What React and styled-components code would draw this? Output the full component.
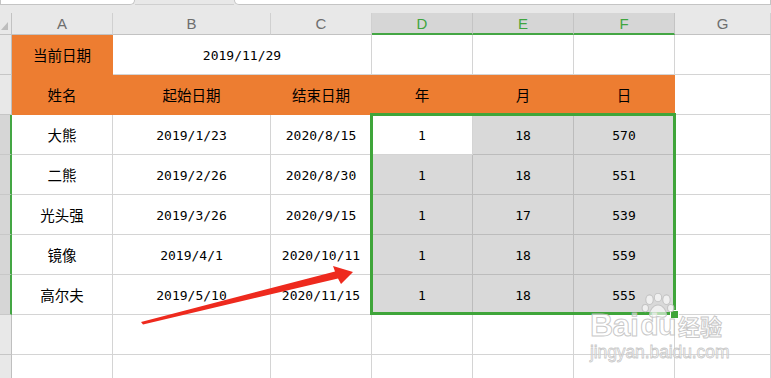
import React from "react";
import styled, { createGlobalStyle, css } from "styled-components";

const Global = createGlobalStyle`
  html, body { margin: 0; padding: 0; background: #ffffff; }
  body { font-family: "Noto Sans CJK SC", "Liberation Sans", sans-serif; }
`;

const Page = styled.div`
  position: relative;
  width: 771px;
  height: 378px;
  overflow: hidden;
  background: #ffffff;
`;

const TabStrip = styled.div`
  display: flex;
  height: 13px;
  background: #e8e8e8;
  align-items: flex-start;
`;

const Tab = styled.div`
  height: 4px;
  width: ${(p) => p.$w};
  flex: ${(p) => (p.$grow ? "1" : "none")};
  background: #ffffff;
  border: 1px solid #c4c4c4;
  border-top: none;
  border-radius: ${(p) => (p.$side === "left" ? "0 0 6px 0" : "0 0 0 6px")};
`;

const Gap = styled.div`
  width: ${(p) => p.$w};
  height: 5px;
  border-bottom: 1px solid #cfcfcf;
  box-sizing: border-box;
`;

const Sheet = styled.div`
  display: grid;
  grid-template-columns: 12px 101px 158px 101px 101px 101px 101px 1fr;
  grid-template-rows: 22px repeat(9, 40px);
`;

const Corner = styled.div`
  position: relative;
  background: #e8e8e8;
  border-right: 1px solid #c2c2c2;
  border-bottom: 1px solid #c2c2c2;
  box-sizing: border-box;
  &::after {
    content: "";
    position: absolute;
    left: 1px;
    bottom: 4px;
    width: 0;
    height: 0;
    border-left: 7px solid transparent;
    border-bottom: 8px solid #bdbdbd;
  }
`;

const ColHead = styled.div`
  display: flex;
  align-items: center;
  justify-content: center;
  box-sizing: border-box;
  font-family: "Liberation Sans", Arial, sans-serif;
  font-size: 15px;
  ${(p) =>
    p.$active
      ? css`
          background: #d6d6d6;
          color: #3fa53f;
          border-right: 1px solid #c4c4c4;
          border-bottom: 2px solid #44a644;
          padding-top: 1px;
        `
      : css`
          background: #e8e8e8;
          color: #6e6e6e;
          border-right: 1px solid #d0d0d0;
          border-bottom: 1px solid #c2c2c2;
        `}
`;

const RowHead = styled.div`
  box-sizing: border-box;
  ${(p) =>
    p.$active
      ? css`
          background: #d6d6d6;
          border-right: 2px solid #44a644;
          border-bottom: 1px solid #c8c8c8;
        `
      : css`
          background: #e8e8e8;
          border-right: 1px solid #bfbfbf;
          border-bottom: 1px solid #c6c6c6;
        `}
`;

const fills = {
  white: { bg: "#ffffff", line: "#d4d4d4" },
  orange: { bg: "#ed7d31", line: "#ed7d31" },
  gray: { bg: "#d9d9d9", line: "#bcbcbc" },
};

const Cell = styled.div`
  display: flex;
  align-items: center;
  justify-content: center;
  box-sizing: border-box;
  grid-column: ${(p) => (p.$span ? `span ${p.$span}` : "auto")};
  background: ${(p) => fills[p.$fill || "white"].bg};
  border-right: 1px solid ${(p) => fills[p.$fill || "white"].line};
  border-bottom: 1px solid ${(p) => fills[p.$fill || "white"].line};
  color: #000000;
  white-space: nowrap;
  font-family: ${(p) =>
    p.$num
      ? `"DejaVu Sans Mono", "Liberation Mono", monospace`
      : `"Noto Sans CJK SC", sans-serif`};
  font-size: ${(p) => (p.$num ? "13px" : "14.5px")};
  padding-top: ${(p) => (p.$num ? "1px" : "0")};
`;

const Selection = styled.div`
  position: absolute;
  left: 370px;
  top: 113px;
  width: 306px;
  height: 202px;
  box-sizing: border-box;
  border: 3px solid #3fa53a;
  pointer-events: none;
`;

const Handle = styled.div`
  position: absolute;
  left: 670px;
  top: 310px;
  width: 7px;
  height: 7px;
  background: #3fa53a;
  border: 1px solid #ffffff;
`;

const Overlay = styled.svg`
  position: absolute;
  left: 0;
  top: 0;
  pointer-events: none;
`;

const Watermark = styled.div`
  position: absolute;
  left: 590px;
  top: 292px;
  width: 160px;
  height: 72px;
  pointer-events: none;
`;

const WmRow = styled.div`
  display: flex;
  align-items: center;
  gap: 2px;
  height: 28px;
  margin-top: 19px;
`;

const WmText = styled.span`
  display: block;
  font-family: ${(p) => (p.$cjk ? `"Noto Sans CJK SC", sans-serif` : `"Liberation Sans", Arial, sans-serif`)};
  font-weight: bold;
  font-size: ${(p) => p.$size};
  line-height: 26px;
  height: 26px;
  color: rgba(255, 255, 255, 0.55);
  -webkit-text-stroke: 1px rgba(190, 190, 190, 0.85);
  letter-spacing: ${(p) => p.$ls || "0"};
`;

const WmPaw = styled.svg`
  position: absolute;
  left: 50px;
  top: 1px;
`;

const WmUrl = styled.div`
  margin-top: 4px;
  font-family: "Liberation Sans", Arial, sans-serif;
  font-size: 17.5px;
  line-height: 18px;
  color: rgba(255, 255, 255, 0.55);
  -webkit-text-stroke: 0.8px rgba(190, 190, 190, 0.85);
  letter-spacing: -0.1px;
`;

const cols = ["A", "B", "C", "D", "E", "F", "G"];

const data = [
  ["大熊", "2019/1/23", "2020/8/15", "1", "18", "570"],
  ["二熊", "2019/2/26", "2020/8/30", "1", "18", "551"],
  ["光头强", "2019/3/26", "2020/9/15", "1", "17", "539"],
  ["镜像", "2019/4/1", "2020/10/11", "1", "18", "559"],
  ["高尔夫", "2019/5/10", "2020/11/15", "1", "18", "555"],
];

const headers = ["姓名", "起始日期", "结束日期", "年", "月", "日"];

export default function App() {
  return (
    <Page>
      <Global />
      <TabStrip>
        <Tab $w="133px" $side="left" />
        <Gap $w="99px" />
        <Tab $grow $side="right" />
      </TabStrip>
      <Sheet>
        <Corner />
        {cols.map((c, i) => (
          <ColHead key={c} $active={i >= 3 && i <= 5}>
            {c}
          </ColHead>
        ))}

        <RowHead />
        <Cell $fill="orange">当前日期</Cell>
        <Cell $span={2} $num>
          2019/11/29
        </Cell>
        <Cell />
        <Cell />
        <Cell />
        <Cell />

        <RowHead />
        {headers.map((h) => (
          <Cell key={h} $fill="orange">
            {h}
          </Cell>
        ))}
        <Cell />

        {data.map((r, ri) => (
          <React.Fragment key={ri}>
            <RowHead $active />
            {r.map((v, ci) => (
              <Cell
                key={ci}
                $num={ci > 0}
                $fill={ci >= 3 && !(ri === 0 && ci === 3) ? "gray" : "white"}
              >
                {v}
              </Cell>
            ))}
            <Cell />
          </React.Fragment>
        ))}

        {[0, 1].map((k) => (
          <React.Fragment key={`e${k}`}>
            <RowHead />
            {cols.map((c) => (
              <Cell key={c} />
            ))}
          </React.Fragment>
        ))}
      </Sheet>

      <Selection />
      <Handle />

      <Overlay width="771" height="378" viewBox="0 0 771 378">
        <polygon
          points="141,322 335,271.5 333,266 353,272 341,284 338,278.5 143,324.5"
          fill="#ee2a1e"
        />
      </Overlay>

      <Watermark>
        <WmPaw width="36" height="26" viewBox="0 0 34 24">
          <g fill="rgba(255,255,255,0.6)" stroke="rgba(190,190,190,0.85)" strokeWidth="1">
            <ellipse cx="9" cy="6" rx="3.5" ry="4.5" />
            <ellipse cx="17" cy="4" rx="3.5" ry="4" />
            <ellipse cx="25" cy="6" rx="3.5" ry="4.5" />
            <ellipse cx="5" cy="14" rx="3" ry="3.5" />
            <ellipse cx="29" cy="14" rx="3" ry="3.5" />
            <path d="M17 11 C12 11 9 17 9 20 C9 23 13 23 17 22 C21 23 25 23 25 20 C25 17 22 11 17 11 Z" />
          </g>
        </WmPaw>
        <WmRow>
          <WmText $size="32px" $ls="-0.5px">Bai</WmText>
          <WmText $size="30px" $ls="-0.5px">du</WmText>
          <WmText $size="22px" $cjk>
            经验
          </WmText>
        </WmRow>
        <WmUrl>jingyan.baidu.com</WmUrl>
      </Watermark>
    </Page>
  );
}
